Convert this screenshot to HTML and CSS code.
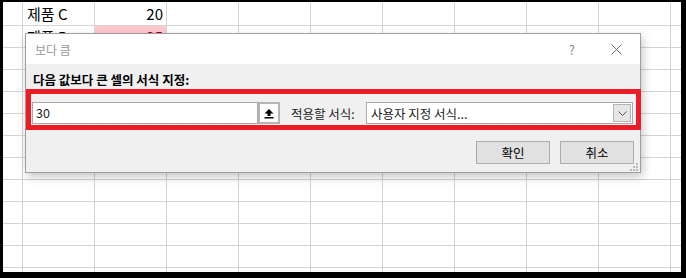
FILE: index.html
```html
<html>
<head>
<title>보다 큼</title>
<link rel="stylesheet" href="styles.css">
</head>
<body>

<div class="sheet">
    <div class="grid" id="grid"></div>

    <div class="dialog">
        <div class="titlebar">
            <span class="title">보다 큼</span>
            <span class="help">?</span>
            <svg class="close" width="11" height="11" viewBox="0 0 11 11">
                <path d="M0.5 0.5 L10.5 10.5 M10.5 0.5 L0.5 10.5" stroke="#6b6b6b" stroke-width="1" fill="none"/>
            </svg>
        </div>
        <div class="body">
            <div class="label">다음 값보다 큰 셀의 서식 지정:</div>
            <div class="row highlight">
                <div class="input">30</div>
                <div class="ref-button">
                    <svg width="10" height="11" viewBox="0 0 10 11">
                        <path d="M5 1 L9.5 5.5 H6.5 V8 H3.5 V5.5 H0.5 Z" fill="#000"/>
                        <rect x="0.5" y="9" width="9" height="1.5" fill="#000"/>
                    </svg>
                </div>
                <span class="apply-label">적용할 서식:</span>
                <div class="select">
                    <span>사용자 지정 서식...</span>
                    <div class="select-arrow">
                        <svg width="9" height="5" viewBox="0 0 9 5">
                            <path d="M0.5 0.5 L4.5 4.5 L8.5 0.5" stroke="#555" stroke-width="1" fill="none"/>
                        </svg>
                    </div>
                </div>
            </div>
            <div class="actions">
                <button>확인</button>
                <button>취소</button>
            </div>
        </div>
        <svg class="grip" width="9" height="9" viewBox="0 0 9 9">
            <rect x="7" y="1" width="2" height="2" fill="#b8b8b8"/>
            <rect x="4" y="4" width="2" height="2" fill="#b8b8b8"/>
            <rect x="7" y="4" width="2" height="2" fill="#b8b8b8"/>
            <rect x="1" y="7" width="2" height="2" fill="#b8b8b8"/>
            <rect x="4" y="7" width="2" height="2" fill="#b8b8b8"/>
            <rect x="7" y="7" width="2" height="2" fill="#b8b8b8"/>
        </svg>
    </div>
</div>

<script>
// visible part of the worksheet
const cells = {
    '0,1': { text: '제품 C' },
    '0,2': { text: '20', num: true },
    '1,1': { text: '제품 D' },
    '1,2': { text: '35', num: true, bad: true }
};

const grid = document.getElementById('grid');
for (let r = 0; r < 13; r++) {
    for (let c = 0; c < 11; c++) {
        const cell = document.createElement('div');
        cell.className = 'cell';
        const info = cells[r + ',' + c];
        if (info) {
            cell.textContent = info.text;
            if (info.num) cell.classList.add('num');
            if (info.bad) cell.classList.add('bad');
        }
        grid.appendChild(cell);
    }
}
</script>

</body>
</html>
```

FILE: styles.css
```css
body {
    margin: 0;
    background-color: #000;
    overflow: hidden;
    font-family: "Noto Sans CJK KR", "Noto Sans", sans-serif;
}

.sheet {
    position: relative;
    margin: 2px 5px 0 3px;
    height: 270px;
    overflow: hidden;
    background-color: #d4d4d4;
}

.grid {
    display: grid;
    grid-template-columns: 19px repeat(10, 71px);
    grid-template-rows: 23px repeat(12, 21px);
    gap: 1px;
    background-color: #d4d4d4;
}

.cell {
    background-color: #fff;
    font-size: 15px;
    line-height: 21px;
    padding: 0 3px 0 4px;
    color: #000;
    white-space: nowrap;
    overflow: hidden;
    display: flex;
    align-items: center;
}

.num {
    justify-content: flex-end;
}

.bad {
    background-color: #ffc7ce;
    color: #9c0006;
}

.dialog {
    position: absolute;
    left: 22px;
    top: 31px;
    width: 616px;
    height: 140px;
    box-sizing: border-box;
    border: 1px solid #9e9e9e;
    background-color: #f0f0f0;
    box-shadow: 2px 4px 9px rgba(0, 0, 0, 0.22);
    font-size: 12.5px;
}

.titlebar {
    display: flex;
    align-items: center;
    height: 30px;
    padding: 0 18px 0 9px;
    background-color: #fff;
}

.title {
    color: #9a9a9a;
    font-size: 12px;
}

.help {
    margin-left: auto;
    color: #8a8a8a;
    font-size: 13px;
}

.close {
    margin-left: 36px;
}

.body {
    padding-top: 7px;
}

.label {
    font-weight: bold;
    line-height: 17px;
    padding-left: 7px;
    margin-bottom: 1px;
}

.row {
    display: flex;
    align-items: center;
}

.highlight {
    width: 615px;
    box-sizing: border-box;
    border: 5px solid #ed1c24;
    padding: 8px 3px 1px 1px;
}

.input {
    width: 226px;
    height: 22px;
    box-sizing: border-box;
    border: 1px solid #a8a8a8;
    background-color: #fff;
    padding-left: 3px;
    line-height: 20px;
    color: #1a1a1a;
}

.ref-button {
    width: 22px;
    height: 22px;
    box-sizing: border-box;
    border: 2px solid #b4b4b4;
    background-color: #fbfbfb;
    display: flex;
    align-items: center;
    justify-content: center;
}

.apply-label {
    margin-left: 11px;
    color: #222;
}

.select {
    margin-left: auto;
    width: 267px;
    height: 22px;
    box-sizing: border-box;
    border: 1px solid #a8a8a8;
    background-color: #fff;
    display: flex;
    align-items: center;
    padding: 0 1px 0 4px;
    color: #1a1a1a;
}

.select-arrow {
    margin-left: auto;
    width: 18px;
    height: 18px;
    box-sizing: border-box;
    border: 1px solid #b4b4b4;
    background-color: #e6e6e6;
    display: flex;
    align-items: center;
    justify-content: center;
}

.actions {
    display: flex;
    justify-content: flex-end;
    gap: 10px;
    padding: 11px 6px 0 0;
}

button {
    width: 74px;
    height: 23px;
    border: 1px solid #adadad;
    background-color: #e1e1e1;
    font-family: inherit;
    font-size: 12.5px;
    padding: 0;
    color: #000;
}

.grip {
    position: absolute;
    right: 2px;
    bottom: 1px;
}
```
